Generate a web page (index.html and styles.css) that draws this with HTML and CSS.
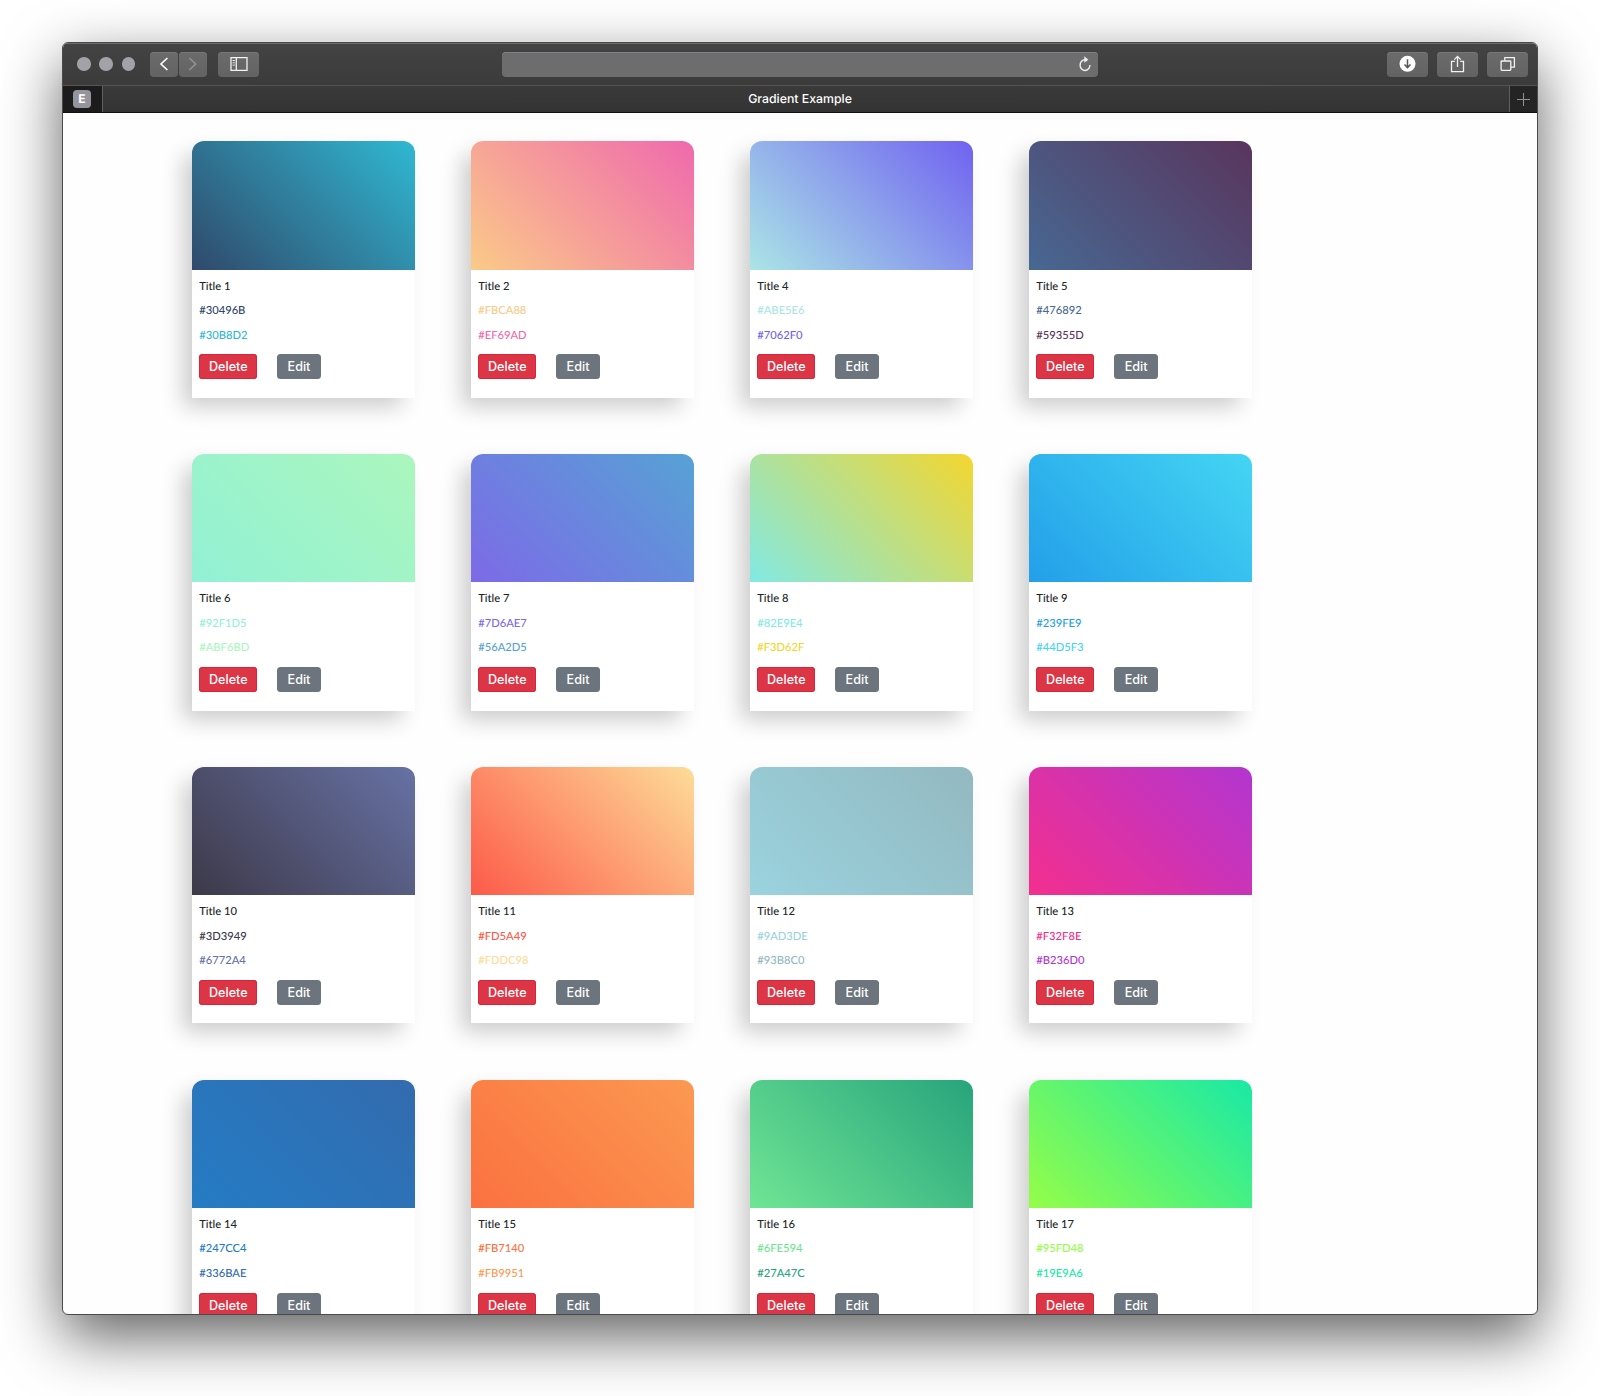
FILE: index.html
```html
<!DOCTYPE html>
<html lang="en">
<head>
<meta charset="utf-8">
<title>Gradient Example</title>
<link rel="stylesheet" href="styles.css">
</head>
<body>
<div class="window">
  <header class="toolbar">
    <div class="lights"><i></i><i></i><i></i></div>
    <div class="nav">
      <button class="tool small" aria-label="Back"><svg width="26" height="25" viewBox="0 0 26 25"><path d="M16.4 6 10 12 16.4 18" fill="none" stroke="#fff" stroke-width="1.7"/></svg></button>
      <button class="tool small" aria-label="Forward"><svg width="26" height="25" viewBox="0 0 26 25"><path d="M9.3 6 15.7 12 9.3 18" fill="none" stroke="#929296" stroke-width="1.6"/></svg></button>
    </div>
    <button class="tool sidebar" aria-label="Sidebar"><svg width="18" height="15" viewBox="0 0 18 15" fill="none" stroke="#f2f2f2" stroke-width="1.3"><path d="M1 .7H17V13.3H1ZM6.3 1V13"/><path d="M2.6 3.5H4.8M2.6 5.8H4.8M2.6 8.1H4.8" stroke-width="1"/></svg></button>
    <div class="address"><svg width="14" height="18" viewBox="0 0 14 18"><path d="M6 3.7A4.9 5.4 0 1 0 10.9 8.9" fill="none" stroke="#eee" stroke-width="1.4"/><path d="M5.3 .3 9.4 3.7 5.3 6.7Z" fill="#eee"/></svg></div>
    <div class="actions">
      <button class="tool" aria-label="Downloads"><svg width="18" height="19" viewBox="0 0 18 19"><circle cx="8.5" cy="8.8" r="8" fill="#fff"/><path d="M8.5 4.3V12.3M5.5 9.5 8.5 12.6 11.5 9.5" fill="none" stroke="#555" stroke-width="1.5"/></svg></button>
      <button class="tool" aria-label="Share"><svg width="16" height="19" viewBox="0 0 16 19" fill="none" stroke="#f2f2f2" stroke-width="1.3"><path d="M4.8 6.3H1.5V16.7H13.5V6.3H10.2M7.5 12V1.5M4.3 4.6 7.5 1.4 10.7 4.6"/></svg></button>
      <button class="tool" aria-label="Tabs"><svg width="16" height="17" viewBox="0 0 16 17" fill="none" stroke="#f2f2f2" stroke-width="1.3"><rect x="1.1" y="5" width="9.7" height="9.3" rx=".7"/><path d="M4.8 4.8V1.7H14.4V11.2H11"/></svg></button>
    </div>
  </header>
  <div class="tabs">
    <div class="pinned"><span>E</span></div>
    <div class="tab">Gradient Example</div>
    <div class="add"><svg width="13" height="13" viewBox="0 0 13 13"><path d="M6.5 0V13M0 6.5H13" stroke="#929292"/></svg></div>
  </div>
  <main class="page">
    <article class="card" style="--a:#30496B;--b:#30B8D2"><div class="swatch"></div><div class="info"><p>Title 1</p><p class="from">#30496B</p><p class="to">#30B8D2</p><div class="buttons"><button class="delete">Delete</button><button class="edit">Edit</button></div></div></article>
    <article class="card" style="--a:#FBCA88;--b:#EF69AD"><div class="swatch"></div><div class="info"><p>Title 2</p><p class="from">#FBCA88</p><p class="to">#EF69AD</p><div class="buttons"><button class="delete">Delete</button><button class="edit">Edit</button></div></div></article>
    <article class="card" style="--a:#ABE5E6;--b:#7062F0"><div class="swatch"></div><div class="info"><p>Title 4</p><p class="from">#ABE5E6</p><p class="to">#7062F0</p><div class="buttons"><button class="delete">Delete</button><button class="edit">Edit</button></div></div></article>
    <article class="card" style="--a:#476892;--b:#59355D"><div class="swatch"></div><div class="info"><p>Title 5</p><p class="from">#476892</p><p class="to">#59355D</p><div class="buttons"><button class="delete">Delete</button><button class="edit">Edit</button></div></div></article>
    <article class="card" style="--a:#92F1D5;--b:#ABF6BD"><div class="swatch"></div><div class="info"><p>Title 6</p><p class="from">#92F1D5</p><p class="to">#ABF6BD</p><div class="buttons"><button class="delete">Delete</button><button class="edit">Edit</button></div></div></article>
    <article class="card" style="--a:#7D6AE7;--b:#56A2D5"><div class="swatch"></div><div class="info"><p>Title 7</p><p class="from">#7D6AE7</p><p class="to">#56A2D5</p><div class="buttons"><button class="delete">Delete</button><button class="edit">Edit</button></div></div></article>
    <article class="card" style="--a:#82E9E4;--b:#F3D62F"><div class="swatch"></div><div class="info"><p>Title 8</p><p class="from">#82E9E4</p><p class="to">#F3D62F</p><div class="buttons"><button class="delete">Delete</button><button class="edit">Edit</button></div></div></article>
    <article class="card" style="--a:#239FE9;--b:#44D5F3"><div class="swatch"></div><div class="info"><p>Title 9</p><p class="from">#239FE9</p><p class="to">#44D5F3</p><div class="buttons"><button class="delete">Delete</button><button class="edit">Edit</button></div></div></article>
    <article class="card" style="--a:#3D3949;--b:#6772A4"><div class="swatch"></div><div class="info"><p>Title 10</p><p class="from">#3D3949</p><p class="to">#6772A4</p><div class="buttons"><button class="delete">Delete</button><button class="edit">Edit</button></div></div></article>
    <article class="card" style="--a:#FD5A49;--b:#FDDC98"><div class="swatch"></div><div class="info"><p>Title 11</p><p class="from">#FD5A49</p><p class="to">#FDDC98</p><div class="buttons"><button class="delete">Delete</button><button class="edit">Edit</button></div></div></article>
    <article class="card" style="--a:#9AD3DE;--b:#93B8C0"><div class="swatch"></div><div class="info"><p>Title 12</p><p class="from">#9AD3DE</p><p class="to">#93B8C0</p><div class="buttons"><button class="delete">Delete</button><button class="edit">Edit</button></div></div></article>
    <article class="card" style="--a:#F32F8E;--b:#B236D0"><div class="swatch"></div><div class="info"><p>Title 13</p><p class="from">#F32F8E</p><p class="to">#B236D0</p><div class="buttons"><button class="delete">Delete</button><button class="edit">Edit</button></div></div></article>
    <article class="card" style="--a:#247CC4;--b:#336BAE"><div class="swatch"></div><div class="info"><p>Title 14</p><p class="from">#247CC4</p><p class="to">#336BAE</p><div class="buttons"><button class="delete">Delete</button><button class="edit">Edit</button></div></div></article>
    <article class="card" style="--a:#FB7140;--b:#FB9951"><div class="swatch"></div><div class="info"><p>Title 15</p><p class="from">#FB7140</p><p class="to">#FB9951</p><div class="buttons"><button class="delete">Delete</button><button class="edit">Edit</button></div></div></article>
    <article class="card" style="--a:#6FE594;--b:#27A47C"><div class="swatch"></div><div class="info"><p>Title 16</p><p class="from">#6FE594</p><p class="to">#27A47C</p><div class="buttons"><button class="delete">Delete</button><button class="edit">Edit</button></div></div></article>
    <article class="card" style="--a:#95FD48;--b:#19E9A6"><div class="swatch"></div><div class="info"><p>Title 17</p><p class="from">#95FD48</p><p class="to">#19E9A6</p><div class="buttons"><button class="delete">Delete</button><button class="edit">Edit</button></div></div></article>
  </main>
</div>
</body>
</html>
```
FILE: styles.css
```css
* { box-sizing: border-box; }
html, body { height: 100%; }
body { margin: 0; padding: 42px 62px 0; background: #fff; overflow: hidden; font-family: Inter, "Liberation Sans", sans-serif; text-rendering: geometricPrecision; }
button { border: 0; padding: 0; font-family: inherit; }
svg { display: block; }

.window {
  width: 1476px; height: 1273px; display: flex; flex-direction: column;
  border: 1px solid #4a4a4a; border-radius: 6px; overflow: hidden; background: #fefefe;
  box-shadow: 0 22px 60px rgba(0,0,0,.62);
}
.toolbar {
  flex: none; height: 42px; display: grid; align-items: start; padding-top: 8px;
  grid-template-columns: 86px 58px 11px 41px 243px 596px 1fr;
  background: linear-gradient(#434343, #3b3b3b); border-top: 1px solid #6c6c6c;
}
.lights { display: flex; gap: 8.6px; padding: 5px 0 0 14px; }
.lights i { width: 13.7px; height: 13.7px; border-radius: 50%; background: #a2a2a8; }
.nav { display: flex; gap: 1px; padding-left: 1px; }
.tool {
  width: 41px; height: 25px; display: flex; align-items: center; justify-content: center;
  border-radius: 4px; background: linear-gradient(#6b6b6b, #636363); box-shadow: inset 0 1px #777;
}
.tool.small { width: 28px; }
.sidebar { grid-column: 4; }
.address {
  grid-column: 6; height: 25px; display: flex; align-items: center; justify-content: flex-end; padding-right: 5px;
  border-radius: 4px; background: #6d6d6d; box-shadow: inset 0 1px #80808a;
}
.actions { display: flex; justify-content: flex-end; gap: 9px; padding-right: 9px; }

.tabs { flex: none; height: 28px; display: flex; border-top: 1px solid #545454; border-bottom: 1px solid #111; background: linear-gradient(#3a3a3a, #333); }
.pinned { width: 40px; display: flex; align-items: center; justify-content: center; background: #1c1c1c; border-right: 1px solid #606060; padding-right: 1px; }
.pinned span { width: 18px; height: 18px; border-radius: 4px; background: #95959e; color: #fff; font-size: 12px; font-weight: 700; line-height: 18px; text-align: center; }
.tab { flex: 1; color: #fff; font-size: 12.3px; font-weight: 500; line-height: 26px; text-align: center; padding-right: 12px; }
.add { width: 28px; display: flex; align-items: center; justify-content: center; background: #242424; border-left: 1px solid #606060; }

.page {
  flex: 1; min-height: 0; overflow: hidden; display: grid; align-content: start;
  grid-template-columns: repeat(4, 223.4px); grid-auto-rows: 256.7px;
  column-gap: 55.65px; row-gap: 56.05px; padding: 28.3px 0 0 128.6px;
}
.card { border-radius: 12px 12px 0 0; background: #fff; box-shadow: -11px 11px 22px -2px rgba(0,0,0,.2); }
.swatch { height: 128.3px; border-radius: 12px 12px 0 0; background: linear-gradient(45deg, var(--a), var(--b)); }
.info { padding: 5.1px 7.6px 0; font-family: Lato, sans-serif; font-size: 11.2px; font-weight: 500; line-height: 24.5px; color: #212529; }
.info p { margin: 0; }
.from { color: var(--a); }
.to { color: var(--b); }
.buttons { display: flex; gap: 20px; margin-top: 6.3px; }
.buttons button { height: 25px; border-radius: 3.5px; color: #fff; font: 500 12.6px/25px Inter, sans-serif; text-align: center; }
.buttons .delete { width: 58.2px; background: #dc3545; box-shadow: inset 0 0 0 1px #da2438; }
.buttons .edit { width: 43.2px; background: #6c757d; }
```
